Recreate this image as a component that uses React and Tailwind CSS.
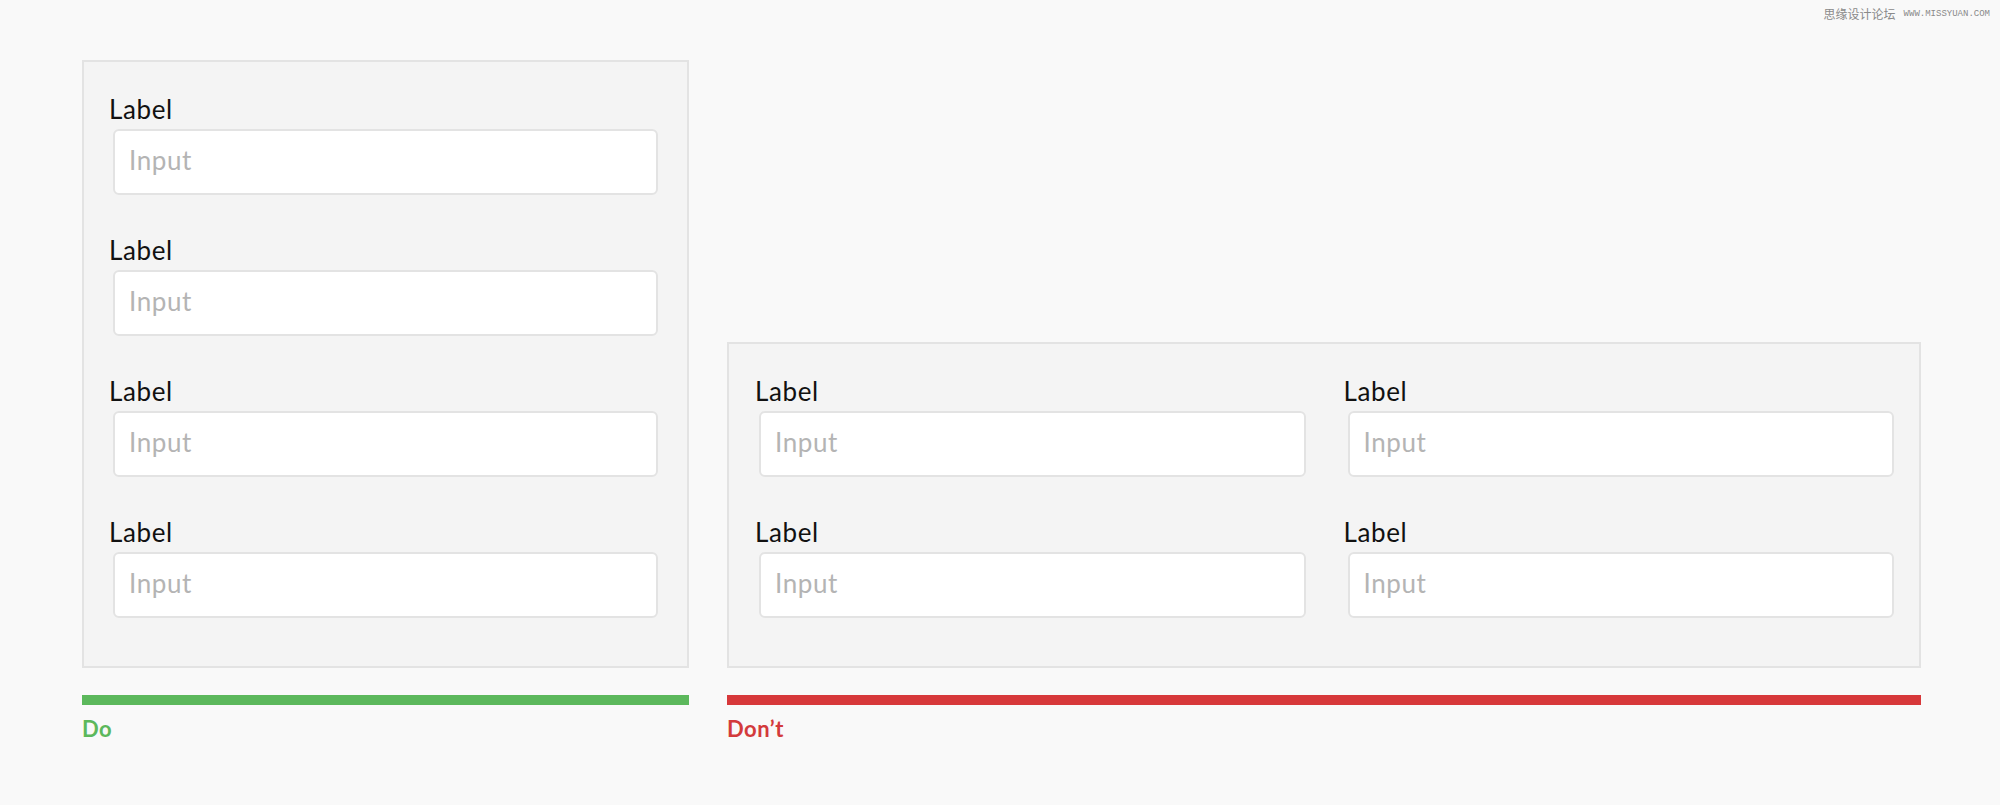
import React from "react";

const Field = ({ className = "" }) => (
  <div className={className}>
    <label className="-ml-[4px] block text-[26px] leading-[30px] tracking-[0.6px] text-[#111]">
      Label
    </label>
    <input
      type="text"
      placeholder="Input"
      className="mt-[5px] block h-[66px] w-full rounded-[6px] border-2 border-[#e3e3e3] bg-white pl-[14px] pb-[4px] text-[26px] tracking-[0.6px] outline-none placeholder:text-[#b4b4b4]"
      style={{ fontFamily: "Lato, 'Open Sans', sans-serif" }}
    />
  </div>
);

const Verdict = ({ ok }) => (
  <>
    <div className={`mt-[27px] h-[10px] ${ok ? "bg-[#5cb85c]" : "bg-[#d7383a]"}`}></div>
    <div
      className={`mt-[11px] text-[22px] font-bold leading-[26px] tracking-[0.5px] ${
        ok ? "text-[#5cb85c]" : "text-[#d33b3c]"
      }`}
    >
      {ok ? "Do" : "Don’t"}
    </div>
  </>
);

export default function App() {
  return (
    <div
      className="relative h-[805px] w-full bg-[#f9f9f9]"
      style={{ fontFamily: "Lato, 'Open Sans', sans-serif" }}
    >
      <div className="absolute right-[10px] top-[7px] flex items-center gap-[8px] text-[#8a8a8a]">
        <span
          className="text-[12px] leading-[14px]"
          style={{ fontFamily: "'Noto Sans CJK SC', sans-serif" }}
        >
          思缘设计论坛
        </span>
        <span
          className="text-[9px] uppercase leading-[14px]"
          style={{ fontFamily: "'Liberation Mono', monospace" }}
        >
          www.missyuan.com
        </span>
      </div>

      <div className="flex items-end gap-[38px] pl-[82px] pt-[60px]">
        <div className="w-[607px]">
          <div className="flex flex-col gap-[40px] border-2 border-[#e3e3e3] bg-[#f4f4f4] px-[29px] pb-[48px] pt-[32px]">
            <Field />
            <Field />
            <Field />
            <Field />
          </div>
          <Verdict ok />
        </div>

        <div className="w-[1194px]">
          <div className="grid grid-cols-2 gap-x-[42px] gap-y-[40px] border-2 border-[#e3e3e3] bg-[#f4f4f4] pb-[48px] pl-[30px] pr-[25px] pt-[32px]">
            <Field />
            <Field />
            <Field />
            <Field />
          </div>
          <Verdict ok={false} />
        </div>
      </div>
    </div>
  );
}
